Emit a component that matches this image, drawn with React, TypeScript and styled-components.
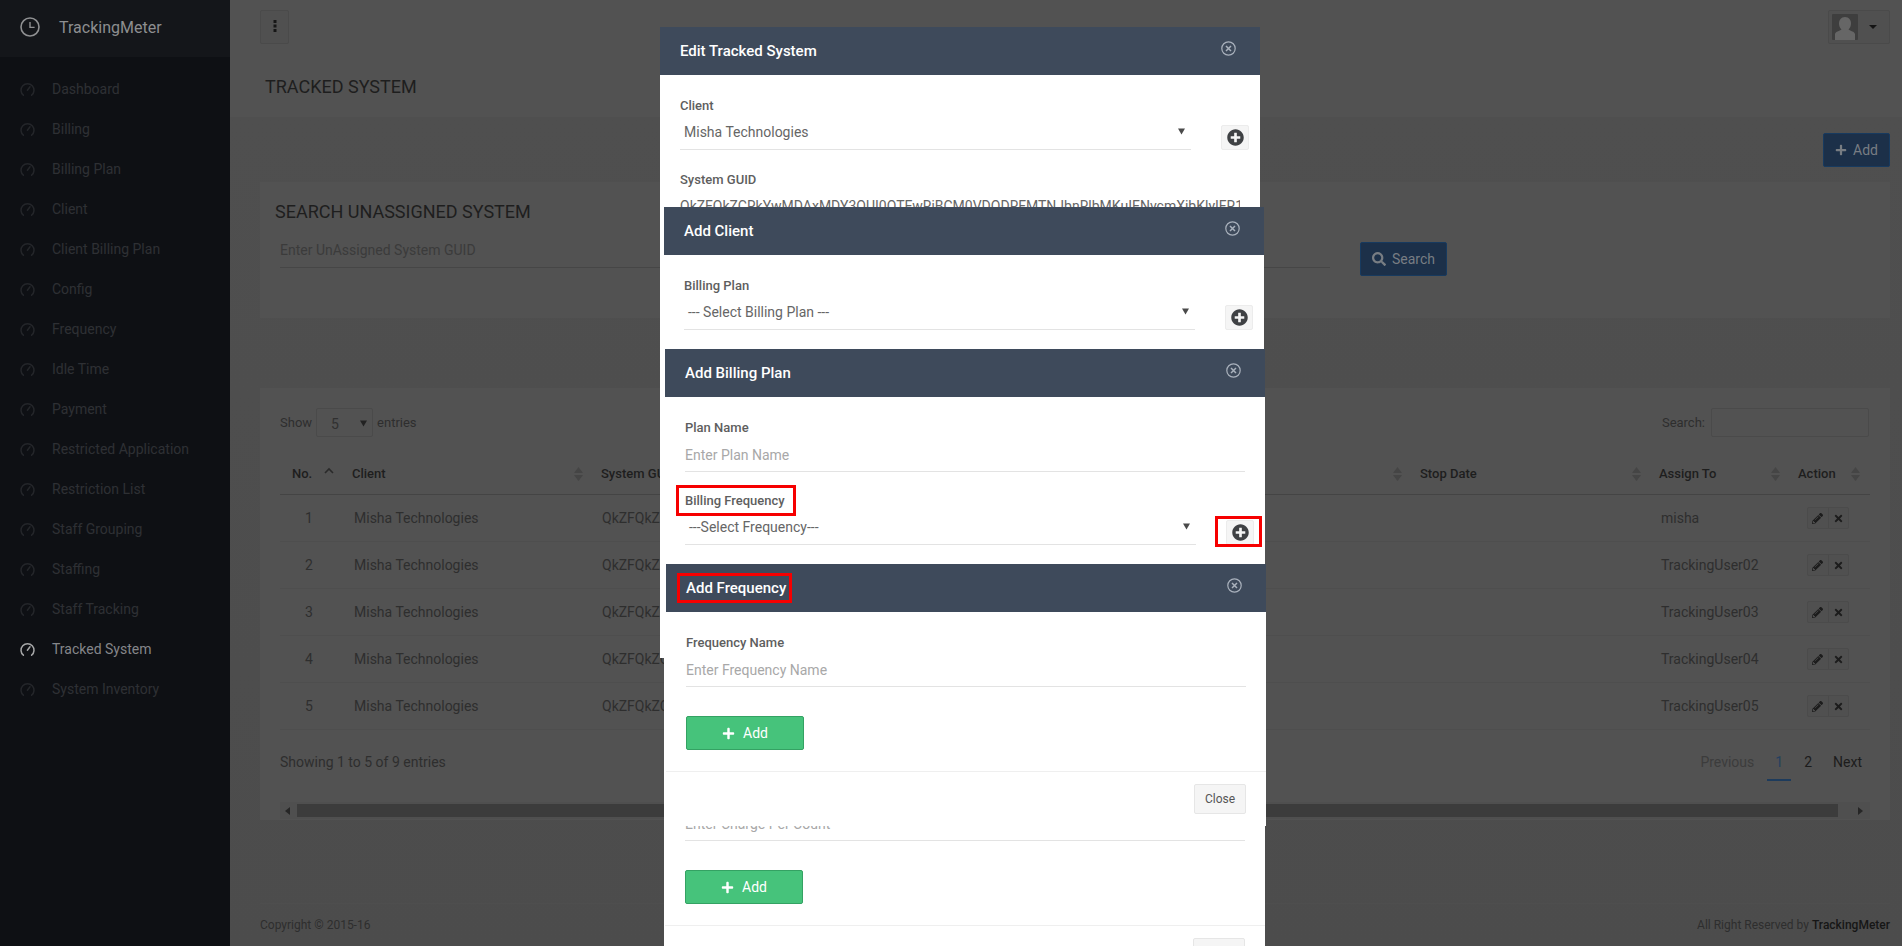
import React from "react";
import styled, { createGlobalStyle } from "styled-components";
import { FaPlus, FaPlusCircle, FaSearch, FaTimes, FaPencilAlt } from "react-icons/fa";

const Global = createGlobalStyle`
  html, body { margin: 0; padding: 0; background: #4e4e4e; }
  body { font-family: Roboto, "Liberation Sans", sans-serif; font-size: 14px; }
  * { box-sizing: border-box; }
`;

const Page = styled.div`
  position: relative; display: flex; width: 1902px; height: 946px; overflow: hidden; background: #4e4e4e;
`;
const Sidebar = styled.aside`
  flex: 0 0 230px; display: flex; flex-direction: column; background: #0e1014;
`;
const Brand = styled.div`
  height: 57px; display: flex; align-items: center; gap: 19px; padding: 0 0 3px 20px; background: #14161a;
  color: #8d8e90; font-size: 16px;
`;
const Nav = styled.nav`
  padding-top: 12px; display: flex; flex-direction: column;
`;
const NavItem = styled.div<{ $active?: boolean }>`
  height: 40px; display: flex; align-items: center; gap: 17px; padding-left: 20px; font-size: 14px;
  color: ${(p) => (p.$active ? "#85868a" : "#2e3034")};
`;
const Main = styled.main`
  flex: 1; display: flex; flex-direction: column; min-width: 0;
`;
const Topbar = styled.header`
  height: 57px; padding: 10px 12px 0 30px; display: flex; justify-content: space-between; align-items: flex-start; background: #525252;
`;
const MenuButton = styled.div`
  width: 29px; height: 34px; display: flex; align-items: center; justify-content: center; padding-bottom: 3px;
  background: #505050; border: 1px solid #4a4a4a; border-radius: 2px;
`;
const UserButton = styled.div`
  width: 62px; height: 34px; display: flex; align-items: center; gap: 10px; padding-left: 3px;
  background: #505050; border: 1px solid #4a4a4a; border-radius: 2px;
`;
const Caret = styled.span`
  width: 0; height: 0; border-left: 4px solid transparent; border-right: 4px solid transparent; border-top: 4px solid #141414; margin-left: 1px;
`;
const TitleBar = styled.div`
  height: 60px; padding: 0 0 0 35px; display: flex; align-items: center; background: #525252;
`;
const PageTitle = styled.h1`
  margin: 0; font-size: 18px; font-weight: 400; color: #1e1e1e; line-height: 60px;
`;
const Content = styled.div`
  padding: 0 12px 0 30px; flex: 1; display: flex; flex-direction: column; background: linear-gradient(#4f4f4f, #4c4c4c);
`;
const AddRow = styled.div`
  height: 65px; padding-top: 16px; display: flex; justify-content: flex-end;
`;
const PrimaryButton = styled.div<{ $w: number }>`
  width: ${(p) => p.$w}px; height: 34px; display: flex; align-items: center; justify-content: center; gap: 6px; padding-bottom: 1px;
  background: #1c3049; border: 1px solid #173a5f; border-radius: 2px; color: #787d83; font-size: 14px;
`;
const SearchCard = styled.section`
  height: 136px; background: #525252; padding: 18px 15px 0;
`;
const SectionTitle = styled.h2`
  margin: 0; font-size: 18px; font-weight: 400; color: #1e1e1e; line-height: 24px;
`;
const SearchRow = styled.div`
  margin-top: 9px; padding-left: 5px; display: flex; gap: 30px; align-items: flex-start;
`;
const DarkInput = styled.div`
  width: 1050px; height: 35px; border-bottom: 1px solid #464646; color: #3b3b3b; font-size: 14px; line-height: 34px;
`;
const SearchBtnWrap = styled.div`
  margin-top: 9px;
`;
const TableCard = styled.section`
  margin-top: 70px; height: 432px; background: #525252; padding: 20px 20px 0;
`;
const TableTools = styled.div`
  display: flex; justify-content: space-between; height: 29px; color: #2e2e2e; font-size: 13px;
`;
const ToolGroup = styled.div`
  display: flex; align-items: center; gap: 4px;
`;
const PageSize = styled.div`
  width: 57px; height: 29px; border: 1px solid #4a4a4a; border-radius: 2px; display: flex; align-items: center; justify-content: space-between;
  padding: 2px 5px 0 14px; color: #303030; font-size: 14px;
`;
const SearchBox = styled.div`
  width: 158px; height: 29px; border: 1px solid #4a4a4a; border-radius: 2px; margin-left: 2px; margin-right: 1px;
`;
const columns = "60px 249px 400px 419px 239px 139px 84px";
const HeadRow = styled.div`
  margin-top: 15px; height: 43px; display: grid; grid-template-columns: ${columns}; align-items: center; border-bottom: 1px solid #444;
  color: #1e1e1e; font-size: 13px; font-weight: 500;
`;
const SortMark = styled.span`
  position: absolute; right: 6px; top: 15px; display: flex;
`;
const HeadCell = styled.div`
  position: relative; padding-left: 12px; height: 100%; display: flex; align-items: center; white-space: nowrap;
  &:last-child ${SortMark} { right: 10px; }
`;
const BodyRow = styled.div`
  height: 47px; display: grid; grid-template-columns: ${columns}; align-items: center; border-bottom: 1px solid #4e4e4e;
  color: #2e2e2e; font-size: 14px;
`;
const NoCell = styled.div`
  padding-left: 25px;
`;
const BodyCell = styled.div`
  padding-left: 14px; white-space: nowrap; overflow: hidden;
`;
const GuidCell = styled(BodyCell)`
  padding-left: 13px;
`;
const ActionGroup = styled.div`
  margin-left: 21px; width: 42px; height: 22px; display: flex; border: 1px solid #4b4b4b; border-radius: 2px; background: #505050;
`;
const ActionBtn = styled.div`
  flex: 1; display: flex; align-items: center; justify-content: center; color: #1c1c1c; font-size: 11px;
  & + & { border-left: 1px solid #4a4a4a; }
`;
const InfoRow = styled.div`
  margin-top: 13px; height: 38px; display: flex; justify-content: space-between; align-items: center; color: #2e2e2e; font-size: 14px;
`;
const Pager = styled.div`
  display: flex; align-items: center; gap: 5px; height: 100%;
`;
const PageLink = styled.span<{ $state?: "off" | "on" }>`
  height: 100%; display: flex; align-items: center; justify-content: center; padding: 2px 8px 0;
  color: ${(p) => (p.$state === "off" ? "#3c3c3c" : p.$state === "on" ? "#24405f" : "#1c1c1c")};
  border-bottom: 2px solid ${(p) => (p.$state === "on" ? "#1d3b5c" : "transparent")};
`;
const ScrollTrack = styled.div`
  margin-top: 21px; height: 17px; background: #4f4f4f; display: flex; align-items: center; padding: 0 7px 0 5px;
`;
const ScrollThumb = styled.div`
  flex: 0 0 1541px; height: 13px; background: #3c3c3c; margin: 0 auto 0 7px;
`;
const Footer = styled.footer`
  margin-top: auto; height: 43px; border-top: 1px solid #4e4e4e; display: flex; justify-content: space-between; align-items: center;
  color: #2e2e2e; font-size: 12px;
  b { font-weight: 500; color: #161616; }
`;

/* stacked dialogs */
const Modal = styled.div<{ $x: number; $y: number; $h?: number; $z: number }>`
  position: absolute; left: ${(p) => p.$x}px; top: ${(p) => p.$y}px; width: 600px; z-index: ${(p) => p.$z};
  ${(p) => (p.$h ? `height: ${p.$h}px; overflow: hidden;` : "")}
  background: #fff;
`;
const ModalHead = styled.div`
  position: relative; height: 48px; background: #3e4a5b; color: #fff; padding: 0 20px; display: flex; align-items: center;
  font-size: 15px; font-weight: 500; line-height: 20px;
`;
const ModalClose = styled.span`
  position: absolute; right: 24px; top: 14px; display: flex;
`;
const ModalBody = styled.div`
  padding: 21px 20px 0;
`;
const Field = styled.div<{ $mt?: number }>`
  margin-top: ${(p) => p.$mt ?? 0}px;
`;
const Label = styled.div`
  height: 20px; line-height: 20px; font-size: 13px; font-weight: 500; color: #5e5e5e;
`;
const Highlight = styled.span<{ $t: number; $r: number; $b: number; $l: number }>`
  position: relative; display: inline-flex; flex: none;
  &::after {
    content: ""; position: absolute; border: 3px solid #f60000; pointer-events: none;
    top: ${(p) => p.$t}px; right: ${(p) => p.$r}px; bottom: ${(p) => p.$b}px; left: ${(p) => p.$l}px;
  }
`;
const TextInput = styled.input`
  display: block; width: 100%; height: 34px; padding: 0; border: 0; border-bottom: 1px solid #e3e3e3; outline: 0;
  font: 400 14px Roboto, sans-serif; color: #555; background: transparent;
  &::placeholder { color: #a8a8a8; opacity: 1; }
`;
const GuidText = styled.div`
  height: 34px; line-height: 32px; font-size: 14px; color: #666; white-space: nowrap; overflow: hidden;
`;
const SelectRow = styled.div`
  display: flex; align-items: flex-end; gap: 30px;
`;
const Select = styled.div`
  flex: 0 0 511px; height: 34px; border-bottom: 1px solid #e3e3e3; padding: 0 6px 2px 4px; display: flex; align-items: center; justify-content: space-between;
  font-size: 14px; color: #666;
`;
const PlusButton = styled.div`
  flex: none; width: 28px; height: 25px; display: flex; align-items: center; justify-content: center; background: #f5f5f5; border: 1px solid #ececec; border-radius: 2px;
  color: #3f4144; font-size: 17px;
`;
const GreenButton = styled.div`
  margin-top: 29px; width: 118px; height: 34px; display: flex; align-items: center; justify-content: center; gap: 8px;
  background: #46c37b; border: 1px solid #34a263; border-radius: 2px; color: #fff; font-size: 14px;
`;
const ModalFoot = styled.div`
  margin-top: 21px; height: 55px; border-top: 1px solid #efefef; padding: 12px 20px; display: flex; justify-content: flex-end;
`;
const CloseButton = styled.div`
  width: 52px; height: 30px; display: flex; align-items: center; justify-content: center; background: #f5f5f5; border: 1px solid #e6e6e6; border-radius: 2px;
  color: #555; font-size: 12px;
`;

const Gauge = ({ on }: { on?: boolean }) => (
  <svg width="15" height="15" viewBox="0 0 15 15" fill="none" stroke={on ? "#a6a7a8" : "#24262a"} strokeWidth="1.5" strokeLinecap="round">
    <path d="M3.4 13.2A6.5 6.5 0 1 1 11.6 13.2" />
    <path d="M7.4 8.2 10 4.8" />
  </svg>
);
const ClockLogo = () => (
  <svg width="20" height="20" viewBox="0 0 20 20" fill="none" stroke="#8f9092" strokeWidth="1.6">
    <circle cx="10" cy="10" r="9" />
    <path d="M10 5v5.4h4.6" strokeWidth="1.4" />
  </svg>
);
const Dots = () => (
  <svg width="4" height="12" viewBox="0 0 4 12" fill="#161616">
    <rect x="0.5" y="0" width="3" height="3" /><rect x="0.5" y="4.5" width="3" height="3" /><rect x="0.5" y="9" width="3" height="3" />
  </svg>
);
const Avatar = () => (
  <svg width="26" height="26" viewBox="0 0 26 26">
    <rect width="26" height="26" rx="1" fill="#3e3e3e" />
    <path d="M13 3c4 0 6 3 6 6.500 0 2.500-1 4.500-2.500 6 2 1.500 6 2 6.500 4.500V26H3v-6c.5-2.500 4.500-3 6.500-4.500C8 14 7 12 7 9.500 7 6 9 3 13 3Z" fill="#666" />
  </svg>
);
const Arrow = () => (
  <svg width="7" height="7" viewBox="0 0 7 7" fill="#4a4a4a"><path d="M0 .5h7L3.500 6.500Z" /></svg>
);
const DarkArrow = () => (
  <svg width="7" height="7" viewBox="0 0 7 7" fill="#222"><path d="M0 .5h7L3.500 6.500Z" /></svg>
);
const SortIcon = () => (
  <svg width="9" height="14" viewBox="0 0 9 14" fill="#454545"><path d="M4.500 0 9 6H0ZM0 8h9l-4.500 6Z" /></svg>
);
const SortUp = () => (
  <svg width="10" height="7" viewBox="0 0 10 7" fill="none" stroke="#2a2a2a" strokeWidth="1.6"><path d="M1 6 5 2l4 4" /></svg>
);
const CircleX = () => (
  <svg width="15" height="15" viewBox="0 0 15 15" fill="none" stroke="#aab2bd" strokeWidth="1.2">
    <circle cx="7.500" cy="7.500" r="6.700" />
    <path d="m5 5 5 5M10 5l-5 5" strokeWidth="1.500" />
  </svg>
);
const Tri = ({ d }: { d: string }) => (
  <svg width="5" height="8" viewBox="0 0 5 8" fill="#262626"><path d={d} /></svg>
);

const navItems = ["Dashboard", "Billing", "Billing Plan", "Client", "Client Billing Plan", "Config", "Frequency", "Idle Time", "Payment", "Restricted Application", "Restriction List", "Staff Grouping", "Staffing", "Staff Tracking", "Tracked System", "System Inventory"];
const heads = ["Client", "System GUID", "Start Date", "Stop Date", "Assign To", "Action"];
const users = ["misha", "TrackingUser02", "TrackingUser03", "TrackingUser04", "TrackingUser05"];
const guid = "QkZFQkZCRkYwMDAxMDY3OUI0OTEwRjBCM0VDODRFMTNJbnRlbMKuIENvcmXibKlyIFR1";

const Head = ({ title }: { title: string }) => (
  <ModalHead>
    {title}
    <ModalClose><CircleX /></ModalClose>
  </ModalHead>
);

export default function App() {
  return (
    <Page>
      <Global />
      <Sidebar>
        <Brand><ClockLogo />TrackingMeter</Brand>
        <Nav>
          {navItems.map((n) => (
            <NavItem key={n} $active={n === "Tracked System"}>
              <Gauge on={n === "Tracked System"} />{n}
            </NavItem>
          ))}
        </Nav>
      </Sidebar>
      <Main>
        <Topbar>
          <MenuButton><Dots /></MenuButton>
          <UserButton><Avatar /><Caret /></UserButton>
        </Topbar>
        <TitleBar><PageTitle>TRACKED SYSTEM</PageTitle></TitleBar>
        <Content>
          <AddRow><PrimaryButton $w={67}><FaPlus size={12} />Add</PrimaryButton></AddRow>
          <SearchCard>
            <SectionTitle>SEARCH UNASSIGNED SYSTEM</SectionTitle>
            <SearchRow>
              <DarkInput>Enter UnAssigned System GUID</DarkInput>
              <SearchBtnWrap><PrimaryButton $w={87}><FaSearch size={14} />Search</PrimaryButton></SearchBtnWrap>
            </SearchRow>
          </SearchCard>
          <TableCard>
            <TableTools>
              <ToolGroup>Show <PageSize>5 <DarkArrow /></PageSize> entries</ToolGroup>
              <ToolGroup>Search: <SearchBox /></ToolGroup>
            </TableTools>
            <HeadRow>
              <HeadCell>No.<SortMark><SortUp /></SortMark></HeadCell>
              {heads.map((h) => (
                <HeadCell key={h}>{h}<SortMark><SortIcon /></SortMark></HeadCell>
              ))}
            </HeadRow>
            {users.map((u, i) => (
              <BodyRow key={u}>
                <NoCell>{i + 1}</NoCell>
                <BodyCell>Misha Technologies</BodyCell>
                <GuidCell>{guid}</GuidCell>
                <BodyCell />
                <BodyCell />
                <BodyCell>{u}</BodyCell>
                <ActionGroup>
                  <ActionBtn><FaPencilAlt /></ActionBtn>
                  <ActionBtn><FaTimes /></ActionBtn>
                </ActionGroup>
              </BodyRow>
            ))}
            <InfoRow>
              Showing 1 to 5 of 9 entries
              <Pager>
                <PageLink $state="off">Previous</PageLink>
                <PageLink $state="on">1</PageLink>
                <PageLink>2</PageLink>
                <PageLink>Next</PageLink>
              </Pager>
            </InfoRow>
            <ScrollTrack>
              <Tri d="M5 0v8L0 4Z" />
              <ScrollThumb />
              <Tri d="M0 0v8l5-4Z" />
            </ScrollTrack>
          </TableCard>
          <Footer>
            <span>Copyright © 2015-16</span>
            <span>All Right Reserved by <b>TrackingMeter</b></span>
          </Footer>
        </Content>
      </Main>

      <Modal $x={660} $y={27} $h={631} $z={1}>
        <Head title="Edit Tracked System" />
        <ModalBody>
          <Field>
            <Label>Client</Label>
            <SelectRow>
              <Select>Misha Technologies<Arrow /></Select>
              <PlusButton><FaPlusCircle /></PlusButton>
            </SelectRow>
          </Field>
          <Field $mt={20}>
            <Label>System GUID</Label>
            <GuidText>{guid}</GuidText>
          </Field>
        </ModalBody>
      </Modal>

      <Modal $x={664} $y={207} $h={739} $z={2}>
        <Head title="Add Client" />
        <ModalBody>
          <Field>
            <Label>Billing Plan</Label>
            <SelectRow>
              <Select>--- Select Billing Plan ---<Arrow /></Select>
              <PlusButton><FaPlusCircle /></PlusButton>
            </SelectRow>
          </Field>
        </ModalBody>
      </Modal>

      <Modal $x={665} $y={349} $z={3}>
        <Head title="Add Billing Plan" />
        <ModalBody>
          <Field>
            <Label>Plan Name</Label>
            <TextInput placeholder="Enter Plan Name" readOnly />
          </Field>
          <Field $mt={19}>
            <Label>
              <Highlight $t={-6} $r={-11} $b={-5} $l={-9}>Billing Frequency</Highlight>
            </Label>
            <SelectRow>
              <Select>---Select Frequency---<Arrow /></Select>
              <Highlight $t={-4} $r={-8} $b={-2} $l={-11}>
                <PlusButton><FaPlusCircle /></PlusButton>
              </Highlight>
            </SelectRow>
          </Field>
          <Field $mt={262}>
            <TextInput placeholder="Enter Charge Per Count" readOnly />
          </Field>
          <GreenButton><FaPlus size={13} />Add</GreenButton>
        </ModalBody>
        <ModalFoot><CloseButton>Close</CloseButton></ModalFoot>
      </Modal>

      <Modal $x={666} $y={564} $z={4}>
        <ModalHead>
          <Highlight $t={-5} $r={-6} $b={-5} $l={-9}>Add Frequency</Highlight>
          <ModalClose><CircleX /></ModalClose>
        </ModalHead>
        <ModalBody>
          <Field>
            <Label>Frequency Name</Label>
            <TextInput placeholder="Enter Frequency Name" readOnly />
          </Field>
          <GreenButton><FaPlus size={13} />Add</GreenButton>
        </ModalBody>
        <ModalFoot><CloseButton>Close</CloseButton></ModalFoot>
      </Modal>
    </Page>
  );
}
